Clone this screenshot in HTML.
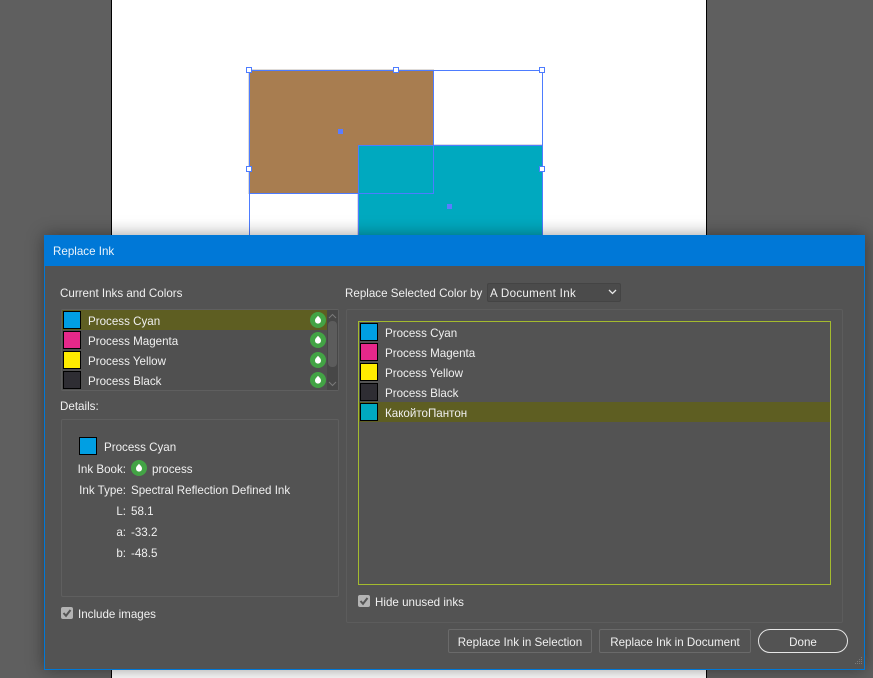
<!DOCTYPE html>
<html><head><meta charset="utf-8">
<style>
html,body{margin:0;padding:0;width:873px;height:678px;overflow:hidden;background:#5f5f5f;}
*{box-sizing:border-box;}
div,span{position:absolute;}
body{font-family:"Liberation Sans","Noto Sans CJK SC",sans-serif;font-size:11.6px;color:#f0f0f0;}
.t{white-space:nowrap;line-height:16px;height:16px;margin-top:1px;}
.sw{width:18px;height:18px;border:1px solid #000;}
.h{width:6px;height:6px;background:#fff;border:1px solid #4d7cff;}
.hl{background:#5e5e22;}
.p{border:1px solid #5f5f5f;border-radius:2px;}
.btn{border:1px solid #6a6a6a;border-radius:2px;text-align:center;line-height:20px;padding-top:2px;white-space:nowrap;}
.r{text-align:right;}
.cb{width:12px;height:12px;background:#b4b4b4;border-radius:2px;}
svg{position:absolute;}
</style></head>
<body>
<!-- artboard -->
<div style="left:111px;top:0;width:596px;height:678px;background:#fff;border-left:1px solid #000;border-right:1px solid #000;"></div>
<div style="left:357px;top:144px;width:186px;height:96px;background:#dcdce4;"></div>
<div style="left:248px;top:69px;width:186px;height:125px;background:#e0dcd8;"></div>
<div style="left:249px;top:70px;width:185px;height:124px;background:#a87d50;"></div>
<div style="left:358px;top:145px;width:185px;height:95px;background:#00a9bf;"></div>
<!-- selection -->
<div style="left:249px;top:70px;width:294px;height:170px;border:1px solid #4d7cff;"></div>
<div style="left:249px;top:70px;width:185px;height:124px;border:1px solid #4d7cff;"></div>
<div style="left:358px;top:145px;width:185px;height:95px;border:1px solid #4d7cff;"></div>
<div class="h" style="left:246px;top:67px;"></div>
<div class="h" style="left:393px;top:67px;"></div>
<div class="h" style="left:539px;top:67px;"></div>
<div class="h" style="left:246px;top:166px;"></div>
<div class="h" style="left:539px;top:166px;"></div>
<div style="left:338px;top:129px;width:5px;height:5px;background:#5a7dff;"></div>
<div style="left:447px;top:204px;width:5px;height:5px;background:#5a7dff;"></div>

<!-- dialog -->
<div style="left:44px;top:235px;width:821px;height:435px;background:#535353;border:1px solid #0078d7;box-shadow:0 0 16px rgba(0,0,0,.4);"></div>
<div style="left:44px;top:235px;width:821px;height:31px;background:#0078d7;"></div>
<div class="t" style="left:53px;top:243px;color:#eaf3fb;">Replace Ink</div>

<!-- left -->
<div class="t" style="left:60px;top:285px;">Current Inks and Colors</div>
<div class="p" style="left:61px;top:309px;width:278px;height:82px;background:#505050;"></div>
<div class="hl" style="left:62px;top:310px;width:265px;height:20px;"></div>
<div style="left:327px;top:310px;width:11px;height:80px;background:#474747;"></div>
<div style="left:328px;top:321px;width:9px;height:46px;background:#5c5c5c;border-radius:4px;"></div>
<svg style="left:328px;top:313px;" width="9" height="6"><path d="M1 5L4.500 1.500L8 5" fill="none" stroke="#7a7a7a" stroke-width="1"/></svg>
<svg style="left:328px;top:381px;" width="9" height="6"><path d="M1 1L4.500 4.500L8 1" fill="none" stroke="#7a7a7a" stroke-width="1"/></svg>

<div class="sw" style="left:63px;top:311px;background:#009fe3;"></div>
<div class="sw" style="left:63px;top:331px;background:#e6288a;"></div>
<div class="sw" style="left:63px;top:351px;background:#ffec00;"></div>
<div class="sw" style="left:63px;top:371px;background:#2e2d33;"></div>
<div class="t" style="left:88px;top:313px;">Process Cyan</div>
<div class="t" style="left:88px;top:333px;">Process Magenta</div>
<div class="t" style="left:88px;top:353px;">Process Yellow</div>
<div class="t" style="left:88px;top:373px;">Process Black</div>

<svg style="left:310px;top:312px;" width="16" height="16"><circle cx="8" cy="8" r="8" fill="#43a345"/><path d="M8 3.800C8.800 5 11 6.300 11 8.600A3 3 0 0 1 5 8.600C5 6.300 7.200 5 8 3.800Z" fill="#fff"/></svg>
<svg style="left:310px;top:332px;" width="16" height="16"><circle cx="8" cy="8" r="8" fill="#43a345"/><path d="M8 3.800C8.800 5 11 6.300 11 8.600A3 3 0 0 1 5 8.600C5 6.300 7.200 5 8 3.800Z" fill="#fff"/></svg>
<svg style="left:310px;top:352px;" width="16" height="16"><circle cx="8" cy="8" r="8" fill="#43a345"/><path d="M8 3.800C8.800 5 11 6.300 11 8.600A3 3 0 0 1 5 8.600C5 6.300 7.200 5 8 3.800Z" fill="#fff"/></svg>
<svg style="left:310px;top:372px;" width="16" height="16"><circle cx="8" cy="8" r="8" fill="#43a345"/><path d="M8 3.800C8.800 5 11 6.300 11 8.600A3 3 0 0 1 5 8.600C5 6.300 7.200 5 8 3.800Z" fill="#fff"/></svg>

<div class="t" style="left:60px;top:398px;">Details:</div>
<div class="p" style="left:61px;top:419px;width:278px;height:178px;"></div>
<div class="sw" style="left:79px;top:437px;background:#009fe3;"></div>
<div class="t" style="left:104px;top:439px;">Process Cyan</div>
<div class="t r" style="left:60px;top:461px;width:66px;">Ink Book:</div>
<svg style="left:131px;top:460px;" width="16" height="16"><circle cx="8" cy="8" r="8" fill="#43a345"/><path d="M8 3.800C8.800 5 11 6.300 11 8.600A3 3 0 0 1 5 8.600C5 6.300 7.200 5 8 3.800Z" fill="#fff"/></svg>
<div class="t" style="left:152px;top:461px;">process</div>
<div class="t r" style="left:60px;top:482px;width:66px;">Ink Type:</div>
<div class="t" style="left:131px;top:482px;">Spectral Reflection Defined Ink</div>
<div class="t r" style="left:60px;top:503px;width:66px;">L:</div>
<div class="t" style="left:131px;top:503px;">58.1</div>
<div class="t r" style="left:60px;top:524px;width:66px;">a:</div>
<div class="t" style="left:131px;top:524px;">-33.2</div>
<div class="t r" style="left:60px;top:545px;width:66px;">b:</div>
<div class="t" style="left:131px;top:545px;">-48.5</div>

<div class="cb" style="left:61px;top:607px;"></div>
<svg style="left:61px;top:607px;" width="12" height="12"><path d="M2.500 6L5 8.800L9.500 3" fill="none" stroke="#555" stroke-width="2"/></svg>
<div class="t" style="left:78px;top:606px;">Include images</div>

<!-- right -->
<div class="t" style="left:345px;top:285px;">Replace Selected Color by</div>
<div style="left:487px;top:283px;width:134px;height:19px;background:#4b4b4b;border:1px solid #444;border-radius:2px;"></div>
<div class="t" style="left:490px;top:285px;letter-spacing:.3px;">A Document Ink</div>
<svg style="left:608px;top:289px;" width="9" height="6"><path d="M1 1L4.500 4.500L8 1" fill="none" stroke="#e8e8e8" stroke-width="1.300"/></svg>

<div class="p" style="left:346px;top:309px;width:497px;height:314px;border-color:#5c5c5c;"></div>
<div style="left:358px;top:321px;width:473px;height:264px;border:1px solid #a4bb2e;"></div>
<div class="hl" style="left:359px;top:402px;width:471px;height:20px;"></div>
<div class="sw" style="left:360px;top:323px;background:#009fe3;"></div>
<div class="sw" style="left:360px;top:343px;background:#e6288a;"></div>
<div class="sw" style="left:360px;top:363px;background:#ffec00;"></div>
<div class="sw" style="left:360px;top:383px;background:#2e2d33;"></div>
<div class="sw" style="left:360px;top:403px;background:#00a9bf;"></div>
<div class="t" style="left:385px;top:325px;">Process Cyan</div>
<div class="t" style="left:385px;top:345px;">Process Magenta</div>
<div class="t" style="left:385px;top:365px;">Process Yellow</div>
<div class="t" style="left:385px;top:385px;">Process Black</div>
<div class="t" style="left:385px;top:405px;">КакойтоПантон</div>

<div class="cb" style="left:358px;top:595px;"></div>
<svg style="left:358px;top:595px;" width="12" height="12"><path d="M2.500 6L5 8.800L9.500 3" fill="none" stroke="#555" stroke-width="2"/></svg>
<div class="t" style="left:375px;top:594px;">Hide unused inks</div>

<div class="btn" style="left:448px;top:629px;width:144px;height:24px;line-height:22px;">Replace Ink in Selection</div>
<div class="btn" style="left:599px;top:629px;width:152px;height:24px;line-height:22px;">Replace Ink in Document</div>
<div class="btn" style="left:758px;top:629px;width:90px;height:24px;line-height:22px;border-radius:12px;border:1px solid #e6e6e6;">Done</div>

<svg style="left:853px;top:657px;" width="11" height="11" fill="#7a7a7a"><rect x="8" y="0" width="1" height="1"/><rect x="6" y="2" width="1" height="1"/><rect x="8" y="2" width="1" height="1"/><rect x="4" y="4" width="1" height="1"/><rect x="6" y="4" width="1" height="1"/><rect x="8" y="4" width="1" height="1"/><rect x="2" y="6" width="1" height="1"/><rect x="4" y="6" width="1" height="1"/><rect x="6" y="6" width="1" height="1"/><rect x="8" y="6" width="1" height="1"/></svg>
</body></html>
